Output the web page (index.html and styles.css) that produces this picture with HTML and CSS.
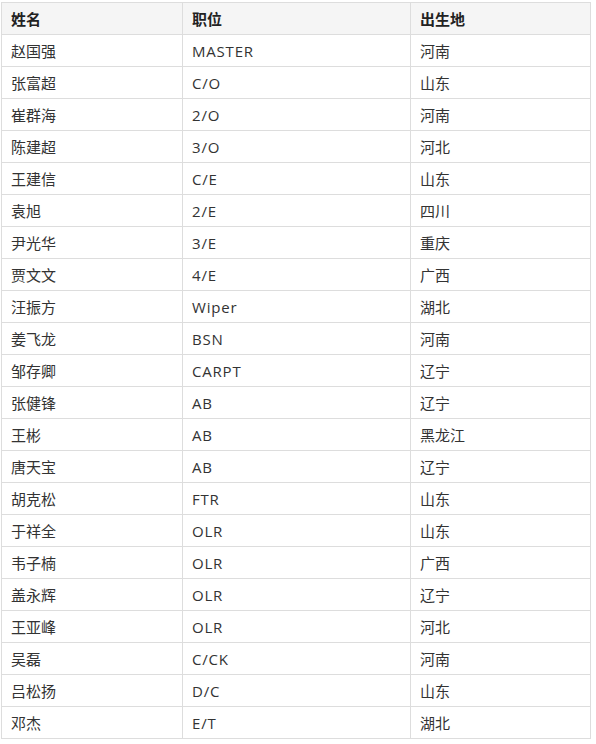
FILE: index.html
```html
<!DOCTYPE html>
<html lang="zh-CN">
<head>
<meta charset="utf-8">
<title>船员名单</title>
<link rel="stylesheet" href="styles.css">
</head>
<body>
<table class="crew">
<thead>
<tr><th class="c1">姓名</th><th class="c2">职位</th><th class="c3">出生地</th></tr>
</thead>
<tbody>
<tr><td>赵国强</td><td class="pos">MASTER</td><td>河南</td></tr>
<tr><td>张富超</td><td class="pos">C/O</td><td>山东</td></tr>
<tr><td>崔群海</td><td class="pos">2/O</td><td>河南</td></tr>
<tr><td>陈建超</td><td class="pos">3/O</td><td>河北</td></tr>
<tr><td>王建信</td><td class="pos">C/E</td><td>山东</td></tr>
<tr><td>袁旭</td><td class="pos">2/E</td><td>四川</td></tr>
<tr><td>尹光华</td><td class="pos">3/E</td><td>重庆</td></tr>
<tr><td>贾文文</td><td class="pos">4/E</td><td>广西</td></tr>
<tr><td>汪振方</td><td class="pos">Wiper</td><td>湖北</td></tr>
<tr><td>姜飞龙</td><td class="pos">BSN</td><td>河南</td></tr>
<tr><td>邹存卿</td><td class="pos">CARPT</td><td>辽宁</td></tr>
<tr><td>张健锋</td><td class="pos">AB</td><td>辽宁</td></tr>
<tr><td>王彬</td><td class="pos">AB</td><td>黑龙江</td></tr>
<tr><td>唐天宝</td><td class="pos">AB</td><td>辽宁</td></tr>
<tr><td>胡克松</td><td class="pos">FTR</td><td>山东</td></tr>
<tr><td>于祥全</td><td class="pos">OLR</td><td>山东</td></tr>
<tr><td>韦子楠</td><td class="pos">OLR</td><td>广西</td></tr>
<tr><td>盖永辉</td><td class="pos">OLR</td><td>辽宁</td></tr>
<tr><td>王亚峰</td><td class="pos">OLR</td><td>河北</td></tr>
<tr><td>吴磊</td><td class="pos">C/CK</td><td>河南</td></tr>
<tr><td>吕松扬</td><td class="pos">D/C</td><td>山东</td></tr>
<tr><td>邓杰</td><td class="pos">E/T</td><td>湖北</td></tr>
</tbody>
</table>
</body>
</html>
```

FILE: styles.css
```css
html, body {
  margin: 0;
  padding: 0;
  background: #ffffff;
}
body {
  padding: 2px 0 0 1px;
  font-family: "Open Sans", "Noto Sans CJK SC", sans-serif;
  font-size: 15px;
  color: #333333;
}
.crew {
  border-collapse: separate;
  border-spacing: 0;
  border-top: 1px solid #dddddd;
  border-left: 1px solid #dddddd;
  table-layout: fixed;
  width: 590px;
}
.crew th,
.crew td {
  border-right: 1px solid #dddddd;
  border-bottom: 1px solid #dddddd;
  height: 32px;
  padding: 0 0 0 9px;
  text-align: left;
  vertical-align: middle;
  line-height: 20px;
  box-sizing: border-box;
}
.crew th {
  background: #f5f5f5;
  font-weight: bold;
  color: #222222;
}
.crew .pos {
  letter-spacing: 0.8px;
}
.crew .c1 { width: 181px; }
.crew .c2 { width: 228px; }
.crew .c3 { width: 180px; }
```
